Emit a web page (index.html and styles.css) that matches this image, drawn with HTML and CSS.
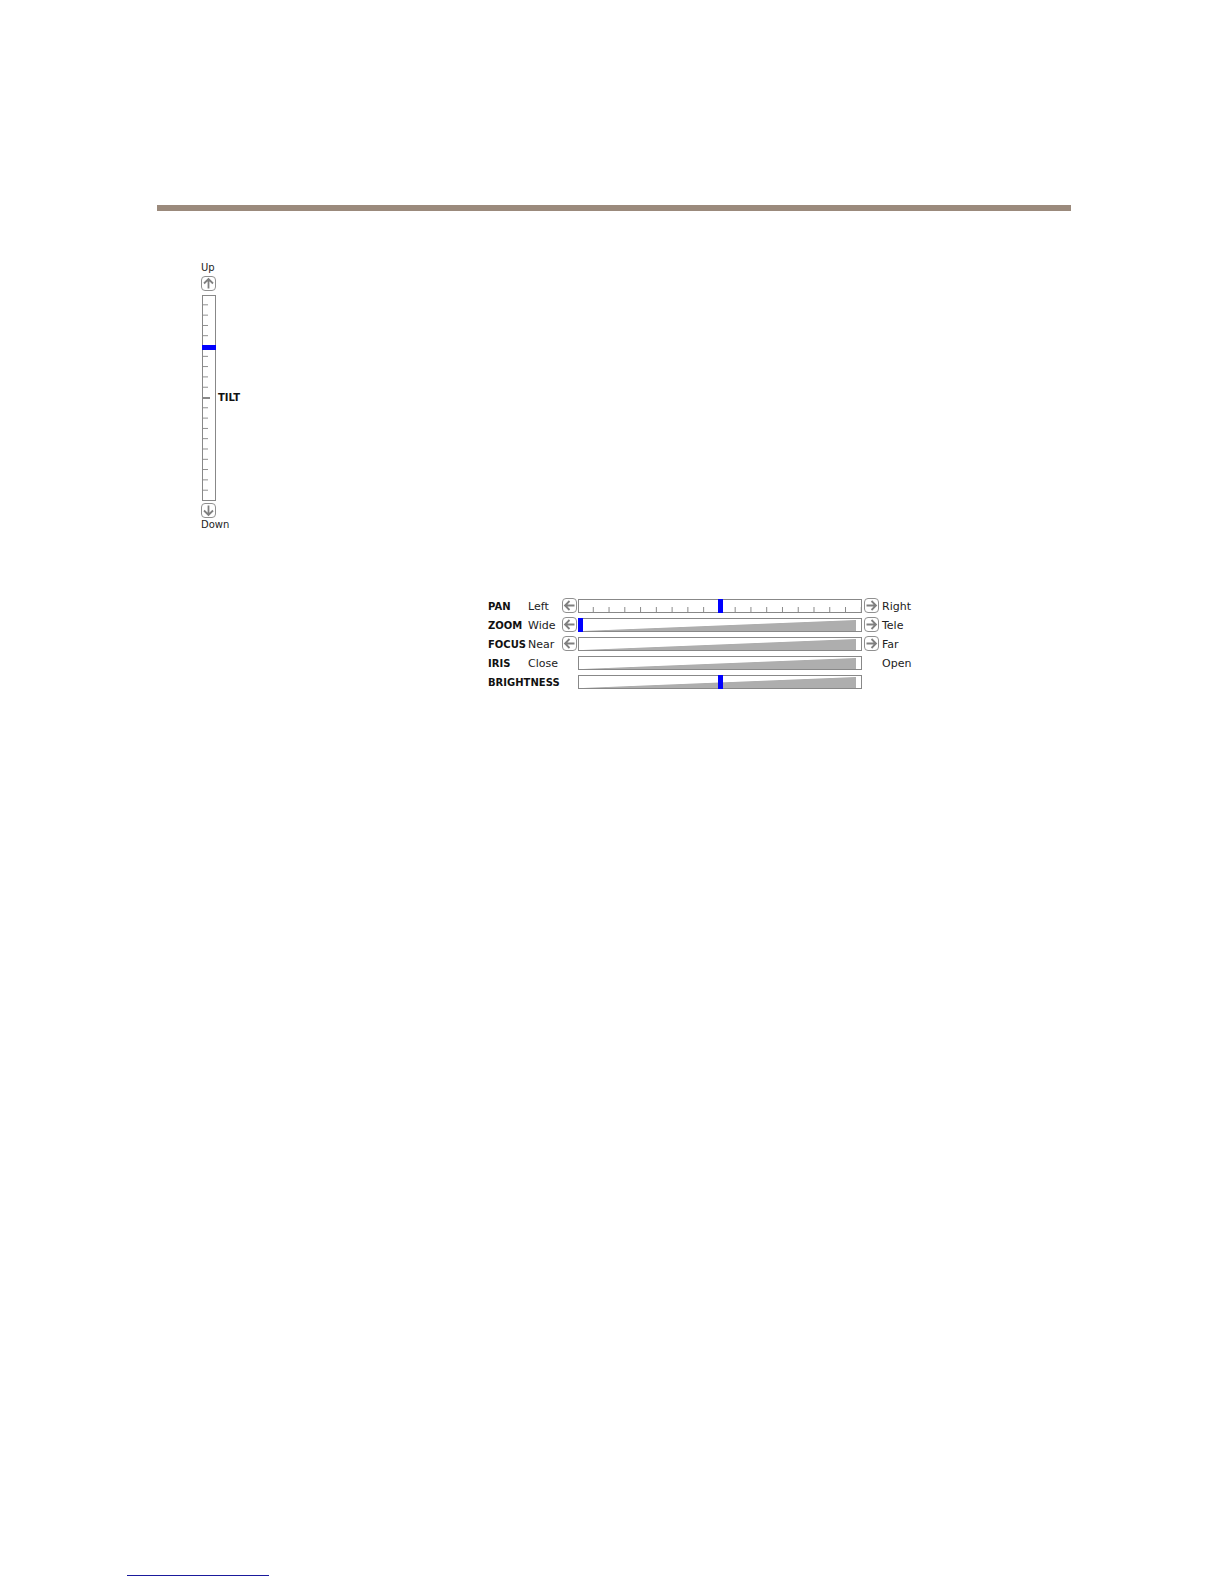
FILE: index.html
```html
<!DOCTYPE html>
<html lang="en">
<head>
  <meta charset="UTF-8" />
  <meta name="viewport" content="width=device-width, initial-scale=1.0"/>
  <title>Camera Controls</title>
  <link rel="stylesheet" href="styles.css">
</head>
<body>
  <svg class="sprite" aria-hidden="true">
    <symbol id="arrow" viewBox="0 0 15 15">
      <rect x="0.5" y="0.5" width="14" height="14" rx="3.5" fill="#fff" stroke="#909090"/>
      <path d="M12.5 7.5H3M7.5 3l-4.5 4.500 4.500 4.500" fill="none" stroke="#808080" stroke-width="1.8"/>
    </symbol>
  </svg>

  <header class="rule"></header>

  <main>
    <section class="tilt">
      <span class="end">Up</span>
      <button class="step up" aria-label="Tilt up"><svg><use href="#arrow"/></svg></button>
      <div class="tilt-row">
        <input type="range" id="tilt" class="slider vertical" value="75" />
        <label for="tilt" class="name">TILT</label>
      </div>
      <button class="step down" aria-label="Tilt down"><svg><use href="#arrow"/></svg></button>
      <span class="end">Down</span>
    </section>

    <section class="controls">
      <div class="row">
        <label for="pan" class="name">PAN</label>
        <span class="low">Left</span>
        <button class="step left" aria-label="Pan left"><svg><use href="#arrow"/></svg></button>
        <input type="range" id="pan" class="slider ticks" value="50" />
        <button class="step right" aria-label="Pan right"><svg><use href="#arrow"/></svg></button>
        <span class="high">Right</span>
      </div>
      <div class="row">
        <label for="zoom" class="name">ZOOM</label>
        <span class="low">Wide</span>
        <button class="step left" aria-label="Zoom wide"><svg><use href="#arrow"/></svg></button>
        <input type="range" id="zoom" class="slider wedge" value="0" />
        <button class="step right" aria-label="Zoom tele"><svg><use href="#arrow"/></svg></button>
        <span class="high">Tele</span>
      </div>
      <div class="row">
        <label for="focus" class="name">FOCUS</label>
        <span class="low">Near</span>
        <button class="step left" aria-label="Focus near"><svg><use href="#arrow"/></svg></button>
        <input type="range" id="focus" class="slider wedge unset" />
        <button class="step right" aria-label="Focus far"><svg><use href="#arrow"/></svg></button>
        <span class="high">Far</span>
      </div>
      <div class="row">
        <label for="iris" class="name">IRIS</label>
        <span class="low">Close</span>
        <input type="range" id="iris" class="slider wedge unset" />
        <span class="high">Open</span>
      </div>
      <div class="row">
        <label for="brightness" class="name wide">BRIGHTNESS</label>
        <input type="range" id="brightness" class="slider wedge" value="50" />
      </div>
    </section>
  </main>

  <footer class="foot-line"></footer>
</body>
</html>
```
FILE: styles.css
```css
* {
  box-sizing: border-box;
}
body {
  font-family: "DejaVu Sans", Verdana, sans-serif;
  font-size: 11px;
  line-height: 14px;
  color: #222;
  background: #fff;
  margin: 0;
  padding: 205px 153px 8px 157px;
  min-height: 100vh;
  display: flex;
  flex-direction: column;
}
.sprite {
  display: none;
}
.rule {
  height: 6px;
  background: #9b8a7c;
}
main {
  padding: 50px 44px 0;
}
.name {
  font-size: 10px;
  font-weight: bold;
  color: #111;
}

/* arrow buttons */
.step {
  display: block;
  width: 15px;
  height: 15px;
  padding: 0;
  border: none;
  background: none;
  cursor: pointer;
}
.step svg {
  display: block;
  width: 15px;
  height: 15px;
}
.up {
  transform: rotate(90deg);
}
.right {
  transform: rotate(180deg);
}
.down {
  transform: rotate(270deg);
}

/* sliders */
.slider {
  appearance: none;
  display: block;
  width: 100%;
  height: 14px;
  margin: 0;
  background-color: #fff;
  background-repeat: no-repeat;
  box-shadow: inset 0 0 0 1px #888;
}
.slider::-webkit-slider-thumb {
  appearance: none;
  width: 5px;
  height: 14px;
  background: #00f;
}
.slider::-moz-range-thumb {
  width: 5px;
  height: 14px;
  border: none;
  border-radius: 0;
  background: #00f;
}
.unset::-webkit-slider-thumb {
  visibility: hidden;
}
.unset::-moz-range-thumb {
  visibility: hidden;
}
.ticks {
  background-image: linear-gradient(to left, #888 1px, transparent 1px);
  background-size: calc(100% / 18) 6px;
  background-position: left bottom;
  background-repeat: repeat-x;
}
.wedge {
  background-image: linear-gradient(to bottom right, #fff 48%, #aeaeae 52%);
  background-size: calc(100% - 10px) 11px;
  background-position: 4px 2px;
}
.vertical {
  writing-mode: vertical-lr;
  direction: rtl;
  width: 14px;
  height: 206px;
  background-image:
    linear-gradient(#888, #888),
    linear-gradient(to top, #888 1px, transparent 1px);
  background-size: 8px 2px, 6px calc(100% / 20);
  background-position: left center, left top;
  background-repeat: no-repeat, repeat-y;
}
.vertical::-webkit-slider-thumb {
  width: 14px;
  height: 5px;
}
.vertical::-moz-range-thumb {
  width: 14px;
  height: 5px;
}

.tilt {
  display: flex;
  flex-direction: column;
  align-items: flex-start;
}
.end {
  font-size: 10px;
}
.tilt .up {
  margin: 1px 0 4px;
}
.tilt .down {
  margin-top: 2px;
}
.tilt-row {
  display: flex;
  align-items: center;
  gap: 2px;
  padding-left: 1px;
}

.controls {
  display: grid;
  gap: 4px;
  width: 100%;
  max-width: 424px;
  margin: 65px 0 0 287px;
}
.row {
  display: grid;
  grid-template-columns: 40px 34px 16px 1fr 20px 30px;
  align-items: center;
  height: 15px;
}
.row .name,
.low,
.high {
  padding-top: 3px;
}
.wide {
  grid-column: span 2;
}
.row .slider {
  grid-column: 4;
}
.row .right {
  margin-left: 2px;
}
.high {
  grid-column: 6;
}

.foot-line {
  width: 142px;
  height: 1px;
  margin: auto 0 0 -30px;
  background: #1a1a9c;
}
```
